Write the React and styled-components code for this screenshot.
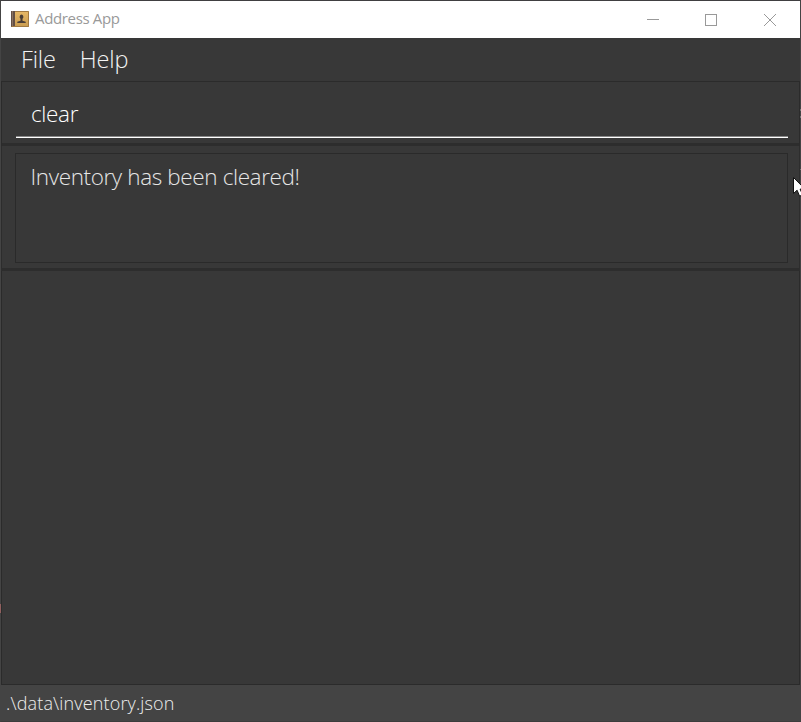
import React from "react";
import styled, { createGlobalStyle } from "styled-components";

const Global = createGlobalStyle`
  * { box-sizing: border-box; }
  body { margin: 0; background: #383838; overflow: hidden; }
`;

const Window = styled.div`
  position: relative;
  display: flex;
  flex-direction: column;
  width: 801px;
  height: 722px;
  background: #383838;
  border: 1px solid #444;
  border-top-color: #403f41;
  border-bottom-color: #3c3c3c;
  font-family: "Open Sans", sans-serif;
  font-weight: 300;
  white-space: pre;
`;

const TitleBar = styled.header`
  display: flex;
  align-items: center;
  height: 37px;
  flex: none;
  padding: 0 1px 0 10px;
  background: #fff;
`;

const Title = styled.span`
  flex: 1;
  margin-left: 6px;
  padding-bottom: 2px;
  font-family: "Open Sans", sans-serif;
  font-size: 15px;
  font-weight: 400;
  letter-spacing: -0.35px;
  line-height: 35px;
  color: #999;
`;

const Controls = styled.div`
  display: flex;
  height: 37px;
`;

const Control = styled.button`
  display: grid;
  place-items: center;
  width: 58.5px;
  padding: 0;
  border: 0;
  background: none;
`;

const MenuBar = styled.nav`
  display: flex;
  gap: 24px;
  height: 43px;
  flex: none;
  padding-left: 20px;
`;

const MenuItem = styled.span`
  font-size: 23.5px;
  line-height: 43px;
  color: #f4f4f4;
  letter-spacing: -0.15px;
`;

const CommandPane = styled.section`
  height: 65px;
  flex: none;
  padding: 11px 11px 0 14px;
  border: 1px solid #2b2b2b;
  border-bottom: 3px solid #2d2d2d;
`;

const CommandField = styled.div`
  height: 45px;
  padding-left: 15px;
  background: linear-gradient(#878787 1px, #fff 1px) 0 100% / 100% 2px no-repeat;
  font-size: 22.5px;
  line-height: 42px;
  letter-spacing: -0.35px;
  color: #fff;
`;

const ResultPane = styled.section`
  height: 125px;
  flex: none;
  padding: 7px 11px 0 13px;
  border: 1px solid #2d2d2d;
  border-top: 0;
  border-bottom: 3px solid #2d2d2d;
`;

const ResultDisplay = styled.div`
  height: 110px;
  padding-left: 14.5px;
  border: 1px solid #2a2a2a;
  font-size: 22.5px;
  line-height: 46px;
  letter-spacing: -0.38px;
  color: #e6e6e6;
`;

const ListPane = styled.main`
  flex: 1;
  border: 1px solid #2b2b2b;
  border-top: 0;
`;

const StatusBar = styled.footer`
  height: 36px;
  flex: none;
  padding-left: 5px;
  background: #444;
  font-size: 18px;
  line-height: 37px;
  letter-spacing: 0.14px;
  color: #eee;
`;

const Cursor = styled.svg`
  position: absolute;
  left: 792px;
  top: 176px;
`;

const EdgeMark = styled.i`
  position: absolute;
  left: ${(p) => (p.$right ? 799 : -1)}px;
  top: ${(p) => p.$top}px;
  width: 1px;
  height: ${(p) => p.$height}px;
  background: ${(p) => p.$color};
`;

const BookIcon = () => (
  <svg width="18" height="17" viewBox="0 0 18 17">
    <defs>
      <linearGradient id="cover" x1="0" y1="0" x2="0" y2="1">
        <stop stopColor="#e8b967" />
        <stop offset="1" stopColor="#c99c50" />
      </linearGradient>
    </defs>
    <rect width="18" height="16" rx=".6" fill="url(#cover)" />
    <path d="M0 0h4v16H0z" fill="#645045" />
    <path d="M1 0h1v16H1z" fill="#8a7260" />
    <path d="M.5 15.5h17M4 .5h13.5v15" fill="none" stroke="#a27a42" />
    <path d="M10.5 3.5a2 2.3 0 0 1 1 4.2v2l3.2 1V12H6.3v-1.3l3.2-1v-2a2 2.3 0 0 1 1-4.2" fill="#493d36" />
  </svg>
);

export default function App() {
  return (
    <>
      <Global />
      <Window>
        <TitleBar>
          <BookIcon />
          <Title>Address App</Title>
          <Controls>
            <Control aria-label="Minimize">
              <svg width="12" height="12"><path d="M0 5.5h12" stroke="#999" /></svg>
            </Control>
            <Control aria-label="Maximize">
              <svg width="12" height="12"><rect x=".5" y=".5" width="11" height="11" fill="none" stroke="#999" /></svg>
            </Control>
            <Control aria-label="Close">
              <svg width="12" height="12"><path d="M0 0l12 12M12 0L0 12" stroke="#999" /></svg>
            </Control>
          </Controls>
        </TitleBar>
        <MenuBar>
          <MenuItem>File</MenuItem>
          <MenuItem>Help</MenuItem>
        </MenuBar>
        <CommandPane>
          <CommandField>clear</CommandField>
        </CommandPane>
        <ResultPane>
          <ResultDisplay>Inventory has been cleared!</ResultDisplay>
        </ResultPane>
        <ListPane />
        <StatusBar>.\data\inventory.json</StatusBar>
        <EdgeMark $top={603} $height={9} $color="#91605f" />
        <EdgeMark $right $top={108} $height={2} $color="#777" />
        <EdgeMark $right $top={115} $height={2} $color="#777" />
        <EdgeMark $right $top={168} $height={1} $color="#777" />
        <Cursor width="14" height="22" viewBox="0 0 14 22">
          <path d="M.5.5v16l3.6-3.3 2.5 6 3-1.3-2.5-5.8H12z" fill="#fff" stroke="#111" />
        </Cursor>
      </Window>
    </>
  );
}
